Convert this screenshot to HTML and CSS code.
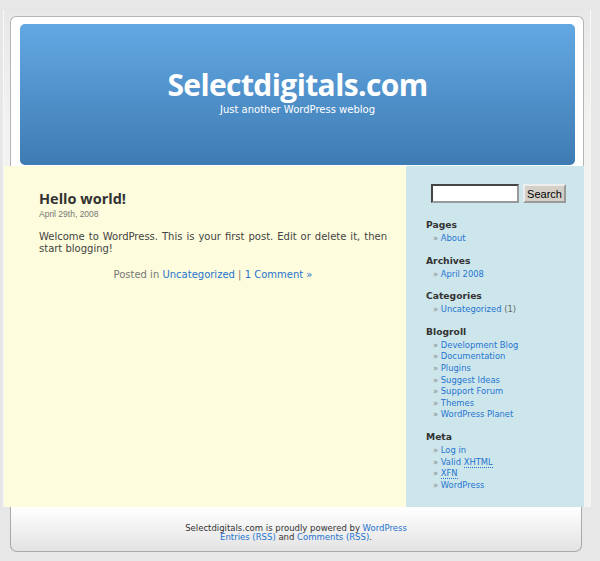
FILE: index.html
```html
<!DOCTYPE html>
<html lang="en">
<head>
    <meta charset="UTF-8">
    <title>Selectdigitals.com</title>
    <link rel="stylesheet" href="styles.css">
</head>
<body>
<div class="page">
    <div class="header-frame">
        <div class="header">
            <h1 class="blog-title"><a href="#">Selectdigitals.com</a></h1>
            <div class="description">Just another WordPress weblog</div>
        </div>
    </div>
    <div class="main">
        <div class="content">
            <div class="post">
                <h2 class="post-title"><a href="#">Hello world!</a></h2>
                <small class="post-date">April 29th, 2008</small>
                <div class="entry">
                    <p>Welcome to WordPress. This is your first post. Edit or delete it, then start blogging!</p>
                </div>
                <p class="postmetadata">Posted in <a href="#">Uncategorized</a> | <a href="#">1 Comment &raquo;</a></p>
            </div>
        </div>
        <div class="sidebar">
            <form class="searchform">
                <input type="text" class="search-text">
                <input type="submit" class="search-btn" value="Search">
            </form>
            <div class="widget">
                <h2>Pages</h2>
                <ul>
                    <li><a href="#">About</a></li>
                </ul>
            </div>
            <div class="widget">
                <h2>Archives</h2>
                <ul>
                    <li><a href="#">April 2008</a></li>
                </ul>
            </div>
            <div class="widget">
                <h2>Categories</h2>
                <ul>
                    <li><a href="#">Uncategorized</a> <span class="count">(1)</span></li>
                </ul>
            </div>
            <div class="widget">
                <h2>Blogroll</h2>
                <ul>
                    <li><a href="#">Development Blog</a></li>
                    <li><a href="#">Documentation</a></li>
                    <li><a href="#">Plugins</a></li>
                    <li><a href="#">Suggest Ideas</a></li>
                    <li><a href="#">Support Forum</a></li>
                    <li><a href="#">Themes</a></li>
                    <li><a href="#">WordPress Planet</a></li>
                </ul>
            </div>
            <div class="widget">
                <h2>Meta</h2>
                <ul>
                    <li><a href="#">Log in</a></li>
                    <li><a href="#">Valid <abbr title="eXtensible HyperText Markup Language">XHTML</abbr></a></li>
                    <li><a href="#"><abbr title="XHTML Friends Network">XFN</abbr></a></li>
                    <li><a href="#">WordPress</a></li>
                </ul>
            </div>
        </div>
    </div>
</div>
<div class="footer">
    <p>Selectdigitals.com is proudly powered by <a href="#">WordPress</a><br>
    <a href="#">Entries (RSS)</a> and <a href="#">Comments (RSS)</a>.</p>
</div>
</body>
</html>
```

FILE: styles.css
```css
body {
    margin: 0;
    background: #e7e7e7;
    font-family: "DejaVu Sans", Verdana, sans-serif;
    color: #333;
}
a {
    color: #2574cf;
    text-decoration: none;
}
.page {
    margin-left: 3px;
    margin-top: 10px;
    padding-top: 6px;
    width: 586px;
    border-left: 1px solid #f8f8f8;
    border-right: 1px solid #f8f8f8;
    background: linear-gradient(#e8e8e8, #f3f3f1 120px);
}
.header-frame {
    margin-left: 6px;
    width: 555px;
    padding: 7px 8px 1px 9px;
    background: #fff;
    border: 1px solid #b4b4b4;
    border-bottom: none;
    border-radius: 6px 6px 0 0;
}
.header {
    height: 141px;
    box-sizing: border-box;
    padding-top: 44px;
    background: linear-gradient(#63a8e3, #3e7bb3);
    border-radius: 5px;
    text-align: center;
    color: #fff;
}
.blog-title {
    margin: 0;
    font-family: "Open Sans", "DejaVu Sans", sans-serif;
    font-size: 30px;
    line-height: 34px;
    letter-spacing: -0.6px;
    font-weight: bold;
}
.blog-title a {
    color: #fff;
}
.description {
    margin-top: 2px;
    font-size: 10px;
    line-height: 12px;
}
.main {
    display: flex;
    width: 580px;
    height: 341px;
}
.content {
    width: 348px;
    padding: 24px 19px 0 35px;
    background: #fdfcdc;
}
.post-title {
    margin: 0;
    font-family: "Open Sans", "DejaVu Sans", sans-serif;
    font-size: 14.5px;
    line-height: 18px;
    font-weight: bold;
}
.post-title a {
    color: #333;
}
.post-date {
    display: block;
    margin-top: 1px;
    font-family: "Liberation Sans", Arial, sans-serif;
    font-size: 8.5px;
    line-height: 11px;
    color: #777;
}
.entry p {
    margin: 11px 0 0;
    font-size: 10px;
    line-height: 12px;
    text-align: justify;
    color: #444;
}
.postmetadata {
    margin: 14px 0 0;
    font-size: 10px;
    line-height: 12px;
    text-align: center;
    color: #777;
}
.sidebar {
    width: 158px;
    padding: 18px 0 0 20px;
    background: #cde6ec;
}
.searchform {
    display: flex;
    gap: 4px;
    margin: 0 0 16px 5px;
}
.search-text {
    width: 88px;
    height: 19px;
    box-sizing: border-box;
    margin: 0;
    border: 2px inset #999;
    background: #fff;
}
.search-btn {
    width: 43px;
    height: 19px;
    box-sizing: border-box;
    margin: 0;
    padding: 0;
    border: 2px outset #eee;
    background: #d4d0c8;
    font-family: "Liberation Sans", Arial, sans-serif;
    font-size: 11px;
    color: #000;
}
.widget {
    margin-bottom: 10px;
}
.widget h2 {
    margin: 0 0 2px;
    font-size: 9.2px;
    line-height: 12px;
    font-weight: bold;
    color: #333;
}
.widget ul {
    list-style: none;
    margin: 0;
    padding: 0 0 0 7px;
}
.widget li {
    font-size: 8.4px;
    line-height: 11.6px;
    color: #666;
}
.widget li:before {
    content: "\00BB\00A0";
    color: #888;
}
abbr {
    text-decoration: none;
    border-bottom: 1px dotted #2574cf;
}
.count {
    color: #666;
}
.footer {
    margin-left: 10px;
    width: 572px;
    height: 45px;
    box-sizing: border-box;
    padding-top: 17px;
    background: linear-gradient(#fff, #e3e3e3);
    border: 1px solid #aaa;
    border-top: none;
    border-radius: 0 0 7px 7px;
    text-align: center;
}
.footer p {
    margin: 0;
    font-size: 8.5px;
    line-height: 9px;
    color: #333;
}
```
